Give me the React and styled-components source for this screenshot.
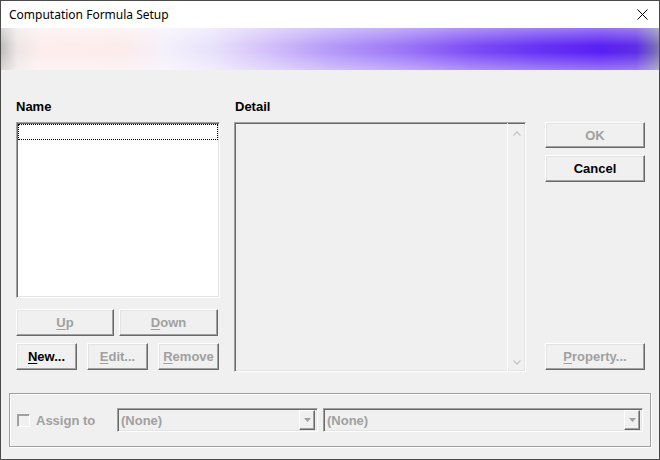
import React from "react"
import styled, { createGlobalStyle } from "styled-components"

const GlobalStyle = createGlobalStyle`
  html, body {
    margin: 0;
    padding: 0;
    background: #f0f0f0;
  }
`

const Window = styled.div`
  width: 660px;
  height: 460px;
  box-sizing: border-box;
  border: 1px solid #4a4a4a;
  background: #f0f0f0;
  display: flex;
  flex-direction: column;
  font-family: "Liberation Sans", Arial, sans-serif;
  overflow: hidden;
`

const TitleBar = styled.div`
  height: 27px;
  flex: none;
  background: #fff;
  display: flex;
  align-items: center;
  justify-content: space-between;
  padding: 0 11px 0 8px;
  font-family: "Noto Sans", "Open Sans", sans-serif;
  font-size: 12px;
  color: #000;
`

const Banner = styled.div`
  height: 42px;
  flex: none;
  background:
    linear-gradient(to bottom, rgba(255,255,255,0.38) 0%, rgba(255,255,255,0) 42%, rgba(255,255,255,0) 58%, rgba(255,255,255,0.38) 100%),
    linear-gradient(to right, #c2bebe 0px, #eee6e6 16px, #fdeded 40px, #fcecec 120px, #f4f0fb 165px, #e9e2fb 210px, #cdb8f9 280px, #b59bf8 330px, #9d78f7 400px, #7e4ef6 470px, #6632f5 540px, #5b20f4 600px, #5e2ee8 635px, #7564c0 652px, #8a80a8 660px);
`

const Main = styled.div`
  display: grid;
  grid-template-columns: 204px 292px 105px;
  column-gap: 14px;
  padding: 28px 0 0 15px;
`

const Column = styled.div`
  display: flex;
  flex-direction: column;
`

const SideColumn = styled(Column)`
  padding: 24px 0 2px 5px;
`

const Label = styled.div`
  height: 24px;
  box-sizing: border-box;
  padding-top: 1px;
  font-size: 13px;
  font-weight: bold;
  line-height: 16px;
  color: #000;
  padding-left: ${p => p.$indent || 0}px;
`

const Sunken = styled.div`
  box-sizing: border-box;
  border: 1px solid;
  border-color: #a0a0a0 #fff #fff #a0a0a0;
  box-shadow: inset 1px 1px #696969, inset -1px -1px #e3e3e3;
`

const ListBox = styled(Sunken)`
  height: 176px;
  background: #fff;
  padding: 1px;
`

const FocusRow = styled.div`
  height: 16px;
  box-sizing: border-box;
  border: 1px dotted #000;
`

const DetailBox = styled(Sunken)`
  height: 250px;
  background: #f0f0f0;
  display: flex;
  justify-content: flex-end;
`

const ScrollTrack = styled.div`
  width: 17px;
  border-left: 1px solid #fff;
  display: flex;
  flex-direction: column;
  justify-content: space-between;
  align-items: center;
  padding: 8px 0 6px;
`

const ButtonRow = styled.div`
  display: grid;
  grid-template-columns: ${p => p.$cols};
  column-gap: ${p => p.$gap}px;
  margin-top: ${p => p.$top}px;
`

const Button = styled.div`
  height: ${p => p.$h || 27}px;
  box-sizing: border-box;
  border: 1px solid;
  border-color: #fff #696969 #696969 #fff;
  box-shadow: inset -1px -1px #a0a0a0, inset 1px 1px #e3e3e3;
  background: #f0f0f0;
  display: flex;
  align-items: center;
  justify-content: center;
  font-size: 13px;
  font-weight: bold;
  color: ${p => (p.$disabled ? "#a0a0a0" : "#000")};
  margin-top: ${p => p.$top || 0};
  u {
    text-underline-offset: 2px;
  }
`

const GroupBox = styled.div`
  margin: 21px 8px 0 8px;
  height: 54px;
  box-sizing: border-box;
  border: 1px solid #a0a0a0;
  box-shadow: inset 1px 1px #fff, 1px 1px #fff;
  display: flex;
  align-items: center;
  padding-left: 7px;
`

const CheckBox = styled(Sunken)`
  width: 13px;
  height: 13px;
  background: #f0f0f0;
  box-shadow: inset 1px 1px #a0a0a0;
`

const AssignLabel = styled.div`
  width: 81px;
  margin-left: 6px;
  font-size: 13px;
  font-weight: bold;
  color: #a0a0a0;
`

const Combo = styled(Sunken)`
  width: ${p => p.$w}px;
  height: 24px;
  margin-right: ${p => p.$gap || 0}px;
  background: #f0f0f0;
  display: flex;
  align-items: center;
  justify-content: space-between;
  padding: 0 2px 0 3px;
  font-size: 13px;
  font-weight: bold;
  color: #a0a0a0;
`

const DropButton = styled.div`
  width: 16px;
  height: 20px;
  box-sizing: border-box;
  border: 1px solid;
  border-color: #fff #696969 #696969 #fff;
  box-shadow: inset -1px -1px #a0a0a0;
  display: flex;
  align-items: center;
  justify-content: center;
`

const CloseIcon = () => (
  <svg width="11" height="11" viewBox="0 0 11 11">
    <path d="M0.5 0.5 L10.5 10.5 M10.5 0.5 L0.5 10.5" stroke="#000" strokeWidth="1" />
  </svg>
)

const Chevron = ({ down }) => (
  <svg width="8" height="5" viewBox="0 0 8 5">
    <path d={down ? "M0.5 0.5 L4 4 L7.5 0.5" : "M0.5 4.5 L4 1 L7.5 4.5"} stroke="#c4c4c4" strokeWidth="1.4" fill="none" />
  </svg>
)

const Triangle = () => (
  <svg width="7" height="4" viewBox="0 0 7 4">
    <path d="M0 0 H7 L3.5 4 Z" fill="#a0a0a0" />
  </svg>
)

const App = () => (
  <>
    <GlobalStyle />
    <Window>
      <TitleBar>
        <span>Computation Formula Setup</span>
        <CloseIcon />
      </TitleBar>
      <Banner />

      <Main>
        <Column>
          <Label>Name</Label>
          <ListBox>
            <FocusRow />
          </ListBox>
          <ButtonRow $cols="98px 99px" $gap={5} $top={11}>
            <Button $disabled><u>U</u>p</Button>
            <Button $disabled><u>D</u>own</Button>
          </ButtonRow>
          <ButtonRow $cols="61px 61px 61px" $gap={10} $top={7}>
            <Button><u>N</u>ew...</Button>
            <Button $disabled><u>E</u>dit...</Button>
            <Button $disabled><u>R</u>emove</Button>
          </ButtonRow>
        </Column>

        <Column>
          <Label $indent={1}>Detail</Label>
          <DetailBox>
            <ScrollTrack>
              <Chevron />
              <Chevron down />
            </ScrollTrack>
          </DetailBox>
        </Column>

        <SideColumn>
          <Button $h={26} $disabled>OK</Button>
          <Button $h={27} $top="7px">Cancel</Button>
          <Button $top="auto" $disabled><u>P</u>roperty...</Button>
        </SideColumn>
      </Main>

      <GroupBox>
        <CheckBox />
        <AssignLabel>Assign to</AssignLabel>
        <Combo $w={201} $gap={5}>
          <span>(None)</span>
          <DropButton><Triangle /></DropButton>
        </Combo>
        <Combo $w={320}>
          <span>(None)</span>
          <DropButton><Triangle /></DropButton>
        </Combo>
      </GroupBox>
    </Window>
  </>
)

export default App
